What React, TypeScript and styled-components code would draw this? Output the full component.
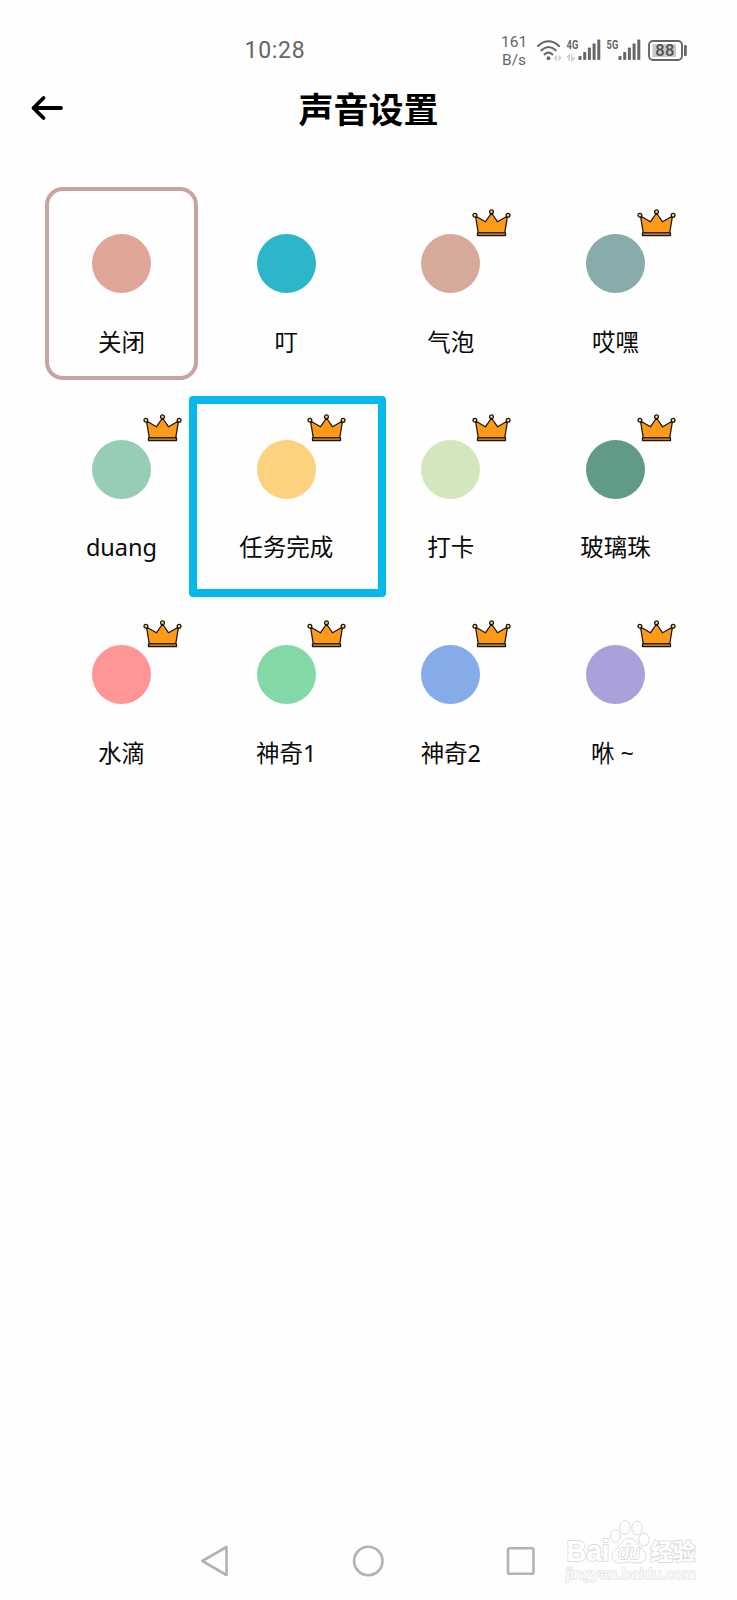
import React from "react";
import styled, { createGlobalStyle } from "styled-components";

const GlobalStyle = createGlobalStyle`
  * { box-sizing: border-box; }
  body { margin: 0; background: #fefefe; }
`;

const Screen = styled.div`
  position: relative;
  display: flex;
  flex-direction: column;
  width: 737px;
  height: 1600px;
  overflow: hidden;
  background: #fefefe;
  color: #0a0a0a;
  font-family: "Noto Sans", "Noto Sans CJK SC", sans-serif;
`;

const StatusBar = styled.div`
  display: flex;
  align-items: center;
  height: 83px;
  padding: 19px 50px 0 244.5px;
  color: #666;
  font-family: Roboto, "Liberation Sans", sans-serif;
`;

const Clock = styled.div`
  font-size: 23px;
  line-height: 28px;
  letter-spacing: 0.7px;
`;

const StatusIcons = styled.div`
  display: flex;
  align-items: center;
  margin-left: auto;
`;

const Speed = styled.div`
  width: 26px;
  margin-right: 9px;
  font-size: 15.5px;
  line-height: 18px;
  text-align: center;
  white-space: nowrap;
`;

const StatusSvg = styled.svg`
  display: block;
  font-family: Roboto, "Liberation Sans", sans-serif;
`;

const Header = styled.header`
  display: grid;
  grid-template-columns: 60px 1fr 60px;
  align-items: center;
  height: 50px;
  padding: 0 30px;
`;

const BackButton = styled.button`
  display: flex;
  padding: 2px 0 0;
  border: 0;
  background: none;
`;

const Title = styled.h1`
  margin: 0;
  font-family: "Noto Sans CJK SC", sans-serif;
  font-size: 35px;
  font-weight: 700;
  line-height: 50px;
  text-align: center;
  color: #000;
`;

const SoundGrid = styled.main`
  display: grid;
  grid-template-columns: repeat(4, 1fr);
  grid-auto-rows: 193px;
  gap: 12.6px 12.2px;
  padding: 54px 45.2px 0;
`;

const SoundCard = styled.div<{ $selected?: boolean }>`
  position: relative;
  display: flex;
  flex-direction: column;
  align-items: center;
  padding-top: 43px;
  border: 4px solid ${(p) => (p.$selected ? "#c9a2a2" : "transparent")};
  border-radius: 18px;
`;

const Dot = styled.div<{ $color: string }>`
  flex: none;
  width: 59px;
  height: 59px;
  border-radius: 50%;
  background: ${(p) => p.$color};
`;

const Label = styled.div`
  margin-top: 31.5px;
  font-size: 23.5px;
  line-height: 34px;
  white-space: pre;
`;

const CrownBadge = styled.svg`
  position: absolute;
  left: 93.5px;
  top: 17.5px;
`;

const Highlight = styled.div`
  position: absolute;
  left: 189px;
  top: 396px;
  width: 197px;
  height: 201px;
  border: 8px solid #05b9ed;
  border-radius: 4px;
`;

const NavBar = styled.nav`
  display: flex;
  align-items: center;
  justify-content: space-between;
  margin-top: auto;
  height: 78px;
  padding: 0 201px 0 200px;
`;

const Watermark = styled.svg`
  position: absolute;
  left: 560px;
  top: 1516px;
`;

type Sound = { name: string; color: string; premium?: boolean; selected?: boolean };

const sounds: Sound[] = [
  { name: "关闭", color: "#dfa698", selected: true },
  { name: "叮", color: "#2bb6c9" },
  { name: "气泡", color: "#d7a99a", premium: true },
  { name: "哎嘿", color: "#88abab", premium: true },
  { name: "duang", color: "#96cdb4", premium: true },
  { name: "任务完成", color: "#fcd27f", premium: true },
  { name: "打卡", color: "#d4e6be", premium: true },
  { name: "玻璃珠", color: "#619b88", premium: true },
  { name: "水滴", color: "#ff9594", premium: true },
  { name: "神奇1", color: "#82d8a6", premium: true },
  { name: "神奇2", color: "#85abe8", premium: true },
  { name: "咻 ~ ", color: "#aaa1da", premium: true },
];

const Crown = () => (
  <CrownBadge width="39" height="28" viewBox="0 0 39 28" stroke="#21150d" strokeWidth="1.3" strokeLinejoin="round">
    <path d="M3.5 7 13.4 12.8 19.5 4 25.6 12.8 35.5 7 32.7 24H6.3Z" fill="#ff9a16" />
    <path d="M5.5 23.8h28v2.7h-28z" fill="#d9a257" />
    <circle cx="2.9" cy="6.2" r="1.9" fill="#f7d884" />
    <circle cx="19.5" cy="2.7" r="1.9" fill="#f7d884" />
    <circle cx="36.1" cy="6.2" r="1.9" fill="#f7d884" />
  </CrownBadge>
);

const barHeights = [4, 8, 12.5, 16.5, 20.5];

const Signal = ({ x, label }: { x: number; label: string }) => (
  <g transform={`translate(${x} 0)`}>
    <text transform="scale(0.78 1)" x="-0.5" y="9.7" fontSize="12" fontWeight="700">
      {label}
    </text>
    {barHeights.map((h, i) => (
      <rect key={i} x={11.5 + i * 4.7} y={21 - h} width="3" height={h} rx="0.8" />
    ))}
  </g>
);

const StatusGlyphs = () => (
  <StatusSvg width="151" height="24" viewBox="0 0 151 24" fill="#666">
    <g fill="none" stroke="#666" strokeWidth="2.1" strokeLinecap="round">
      <path d="M2 7Q12.5-2.5 23 7" />
      <path d="M5.3 11.3Q12.5 4.7 19.7 11.3" />
      <path d="M8.6 15.4Q12.5 12 16.4 15.4" />
    </g>
    <circle cx="12.5" cy="19.2" r="1.9" />
    <path d="M21 16v6l-3.6-3zM22.3 16v6l3.6-3z" fill="#d0d0d0" />
    <path d="M33.2 22v-6l-2 2.5M35.8 15.5v6l3.2-3" fill="none" stroke="#c8c8c8" strokeWidth="1.4" />
    <Signal x={31} label="4G" />
    <Signal x={71} label="5G" />
    <rect x="113" y="2" width="33" height="19" rx="4" fill="none" stroke="#666" strokeWidth="1.9" />
    <rect x="116.5" y="5.2" width="23.5" height="12.8" rx="1" fill="#c9c9c9" />
    <text x="129" y="17.3" fontSize="16.5" fontWeight="500" fill="#505050" textAnchor="middle" letterSpacing="0.4">
      88
    </text>
    <rect x="148" y="6" width="2.8" height="11" rx="1" />
  </StatusSvg>
);

export default function App() {
  return (
    <>
      <GlobalStyle />
      <Screen>
        <StatusBar>
          <Clock>10:28</Clock>
          <StatusIcons>
            <Speed>
              161
              <br />
              B/s
            </Speed>
            <StatusGlyphs />
          </StatusIcons>
        </StatusBar>
        <Header>
          <BackButton aria-label="返回">
            <svg width="34" height="28" viewBox="0 0 34 28" fill="none" stroke="#000" strokeWidth="3.8" strokeLinecap="round" strokeLinejoin="round">
              <path d="M31 13H3.5M13.5 3 3.5 13l10 10" />
            </svg>
          </BackButton>
          <Title>声音设置</Title>
        </Header>
        <SoundGrid>
          {sounds.map((s) => (
            <SoundCard key={s.name} $selected={s.selected}>
              <Dot $color={s.color} />
              <Label>{s.name}</Label>
              {s.premium && <Crown />}
            </SoundCard>
          ))}
        </SoundGrid>
        <Highlight />
        <NavBar>
          <svg width="30" height="34" viewBox="0 0 30 34" fill="none" stroke="#b2b2b2" strokeWidth="2.6" strokeLinejoin="round">
            <path d="M2.3 17 26.5 3v28z" />
          </svg>
          <svg width="32" height="32" viewBox="0 0 32 32" fill="none" stroke="#b2b2b2" strokeWidth="2.6">
            <circle cx="16.3" cy="16" r="14.2" />
          </svg>
          <svg width="30" height="30" viewBox="0 0 30 30" fill="none" stroke="#b2b2b2" strokeWidth="2.6">
            <rect x="2" y="2.3" width="25.5" height="25.5" rx="1.5" />
          </svg>
        </NavBar>
        <Watermark width="145" height="70" viewBox="0 0 145 70" fill="#fefefe" stroke="#dedede" strokeWidth="1">
          <text x="6.5" y="44.5" fontFamily="Liberation Sans, sans-serif" fontWeight="700" fontSize="29" textLength="43" lengthAdjust="spacingAndGlyphs" strokeWidth="2" paintOrder="stroke">
            Bai
          </text>
          <ellipse cx="55.5" cy="20" rx="5" ry="6.3" />
          <ellipse cx="65" cy="11.5" rx="5.2" ry="7" />
          <ellipse cx="77" cy="12" rx="5.2" ry="7" />
          <ellipse cx="84" cy="23.5" rx="5.2" ry="6.5" />
          <path d="M69 22c6 0 8 5 12 10 8 7 6 15-3 15-4 0-6-1-9-1s-5 1-9 1c-8 0-11-8-4-14 5-4 7-11 13-11Z" />
          <text x="58" y="42.5" fontFamily="Liberation Sans, sans-serif" fontWeight="400" fontStyle="italic" fontSize="20" textLength="22" lengthAdjust="spacingAndGlyphs" strokeWidth="2" paintOrder="stroke">
            du
          </text>
          <text x="90.5" y="43.5" fontFamily="Noto Sans CJK SC, sans-serif" fontWeight="700" fontSize="22.5" strokeWidth="2" paintOrder="stroke">
            经验
          </text>
          <text x="6" y="62.5" fontFamily="Liberation Sans, sans-serif" fontSize="15.5" fontWeight="400" stroke="#e4e4e4" strokeWidth="1.6" paintOrder="stroke" textLength="130">
            jingyan.baidu.com
          </text>
        </Watermark>
      </Screen>
    </>
  );
}
